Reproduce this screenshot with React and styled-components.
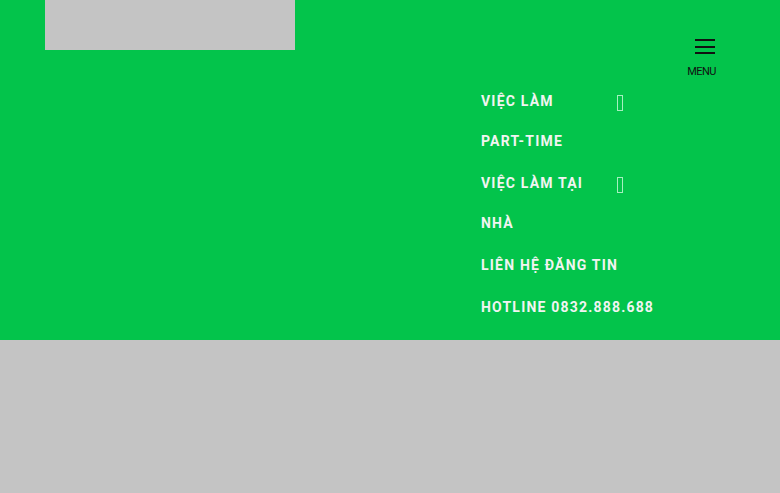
import React from "react";
import styled, { createGlobalStyle } from "styled-components";

const Global = createGlobalStyle`
  html, body { margin: 0; padding: 0; }
  body { background: #c4c4c4; font-family: Roboto, "Noto Sans", sans-serif; }
`;

const Header = styled.header`
  display: flex;
  align-items: flex-start;
  height: 340px;
  background: #03c44b;
  padding-left: 45px;
  box-sizing: border-box;
`;

const Logo = styled.div`
  width: 250px;
  height: 50px;
  background: #c4c4c4;
  flex: none;
`;

const Nav = styled.ul`
  list-style: none;
  margin: 0 0 0 186px;
  padding: 81px 0 0;
  width: 190px;
  flex: none;
`;

const Item = styled.li`
  display: flex;
  align-items: flex-start;
  margin-bottom: 2px;
`;

const Label = styled.a`
  display: block;
  width: ${(p) => (p.$sub ? "110px" : "auto")};
  font-size: 14px;
  font-weight: 700;
  line-height: 40px;
  letter-spacing: 1.2px;
  color: #f2f4f2;
  text-transform: uppercase;
  white-space: ${(p) => (p.$sub ? "normal" : "nowrap")};
  text-decoration: none;
`;

const Caret = styled.span`
  display: flex;
  align-items: center;
  height: 40px;
  padding-top: 3px;
  box-sizing: border-box;
  margin-left: 26px;
  &::before {
    content: "";
    display: block;
    width: 4px;
    height: 14px;
    border: 1px solid rgba(220, 255, 230, 0.75);
  }
`;

const Toggle = styled.button`
  margin: 39px 64px 0 auto;
  padding: 0;
  background: none;
  border: 0;
  display: flex;
  flex-direction: column;
  align-items: center;
  font-family: Roboto, sans-serif;
  cursor: pointer;
`;

const Bars = styled.span`
  display: flex;
  flex-direction: column;
  gap: 4.5px;
  margin-left: 7px;
  span {
    display: block;
    width: 20px;
    height: 2px;
    background: #111;
  }
`;

const MenuText = styled.span`
  margin-top: 12px;
  font-size: 11px;
  line-height: 12px;
  color: #111;
  letter-spacing: -0.5px;
`;

const items = [
  { label: "Việc làm part-time", sub: true },
  { label: "Việc làm tại nhà", sub: true },
  { label: "Liên hệ đăng tin" },
  { label: "Hotline 0832.888.688" },
];

export default function App() {
  return (
    <>
      <Global />
      <Header>
        <Logo />
        <Nav>
          {items.map((it) => (
            <Item key={it.label}>
              <Label href="#" $sub={it.sub}>{it.label}</Label>
              {it.sub && <Caret />}
            </Item>
          ))}
        </Nav>
        <Toggle>
          <Bars>
            <span />
            <span />
            <span />
          </Bars>
          <MenuText>MENU</MenuText>
        </Toggle>
      </Header>
    </>
  );
}
